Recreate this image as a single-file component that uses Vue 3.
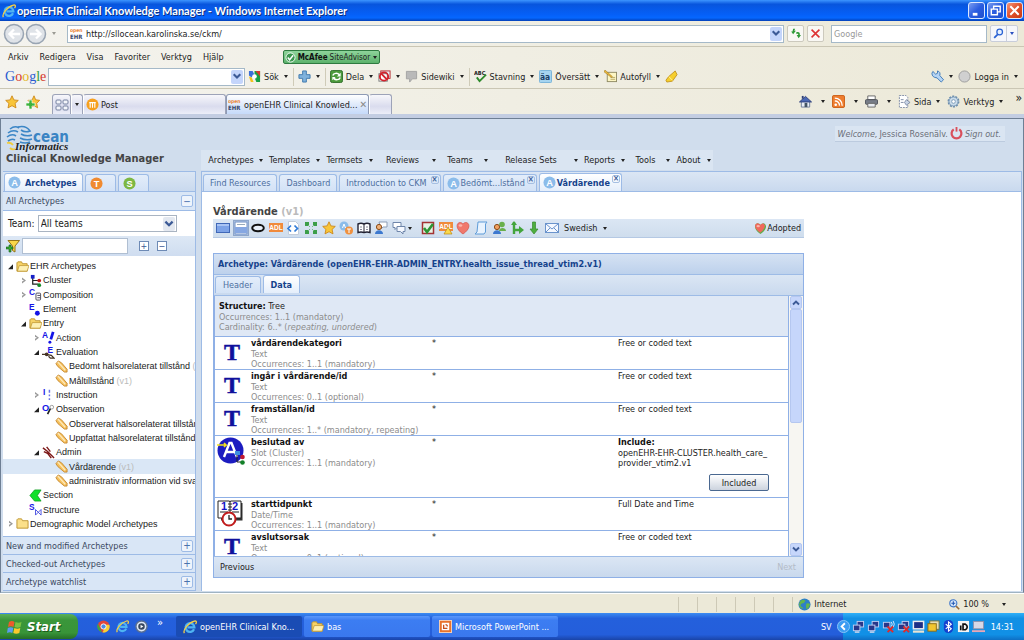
<template>
  <div class="screen">
    <!-- icon sprite -->
    <svg class="sprite" aria-hidden="true">
      <symbol id="ie" viewBox="0 0 16 16">
        <path d="M12.6 10.6A5 5 0 1 1 13 8.4H5" fill="none" stroke="#4fb4f2" stroke-width="2.6" />
        <path d="M1.6 15C-.5 12 6 3 13 1.200c3-.6 2.600 2 1.300 3.600" fill="none" stroke="#f5cf45" stroke-width="1.500" />
      </symbol>
      <symbol id="ehr" viewBox="0 0 14 14">
        <text x="0" y="5" font-size="5" font-weight="bold" fill="#e8873c" font-family="DejaVu Sans Condensed">open</text>
        <text x="0" y="12" font-size="6" font-weight="bold" fill="#3a4868" font-family="DejaVu Sans Condensed">EHR</text>
      </symbol>
      <symbol id="gsearch" viewBox="0 0 14 14">
        <path d="M1 1h4l2 4-3 3-3-2z" fill="#3b6fd8" /><path d="M7 1h6v12H9l-2-5z" fill="#15a045" />
        <path d="M8 1h5v6z" fill="#d93a2e" /><path d="M1 7l3 1 2 5H3z" fill="#f3c21c" /><circle cx="7" cy="7" r="2.500" fill="#fff" />
      </symbol>
      <symbol id="plus" viewBox="0 0 14 14">
        <path d="M5 1h4v4h4v4H9v4H5V9H1V5h4z" fill="#7fb2dc" stroke="#3f78ad" />
      </symbol>
      <symbol id="share" viewBox="0 0 14 14">
        <rect x=".5" y=".5" width="13" height="13" rx="2" fill="#4c9a3c" stroke="#2f6d29" />
        <path d="M3 6c1-3 5-3 7-1M11 8c-1 3-5 3-7 1" fill="none" stroke="#fff" stroke-width="1.600" />
        <path d="M11.500 3v4h-4zM2.500 11V7.500H6z" fill="#fff" />
      </symbol>
      <symbol id="popup" viewBox="0 0 14 14">
        <rect x="3" y="1" width="10" height="8" fill="#e9eef5" stroke="#b3272d" /><rect x="1" y="4" width="9" height="8" fill="#fff" stroke="#777" />
        <circle cx="6.500" cy="7" r="4.500" fill="none" stroke="#d3222c" stroke-width="2" /><path d="M3.500 4l6 6" stroke="#d3222c" stroke-width="2" />
      </symbol>
      <symbol id="bubble" viewBox="0 0 14 14"><path d="M1.500 1.500h11v8H8l-3 3.500V9.500H1.500z" fill="#b9b9b9" stroke="#a2a2a2" /></symbol>
      <symbol id="spell" viewBox="0 0 14 14">
        <text x="0" y="5" font-size="6" font-weight="bold" fill="#222" font-family="DejaVu Sans Condensed">ABC</text>
        <path d="M3 8l3 4 7-7" fill="none" stroke="#2e8a2b" stroke-width="2" />
      </symbol>
      <symbol id="translate" viewBox="0 0 14 14">
        <rect x=".5" y=".5" width="13" height="13" rx="1" fill="#a6d4ef" stroke="#74b1d8" />
        <text x="1" y="10.500" font-size="9" font-weight="bold" fill="#1c4066" font-family="DejaVu Sans Condensed">äa</text>
      </symbol>
      <symbol id="autofill" viewBox="0 0 14 14">
        <rect x="3.500" y="2.500" width="10" height="10" fill="#fdf6c4" stroke="#8f8a64" /><path d="M7 8h5M7 10h5" stroke="#b4a765" />
        <path d="M1 0l8 7-1 1-8-6z" fill="#e9b63b" stroke="#8d6a1b" stroke-width=".5" />
      </symbol>
      <symbol id="marker" viewBox="0 0 14 14">
        <path d="M1 11l3-4 7-6 2 4-5 7-6 1z" fill="#f6cf2e" stroke="#b9850d" stroke-width=".8" /><path d="M4 7l4 4" stroke="#fff3a0" />
      </symbol>
      <symbol id="wrench" viewBox="0 0 14 14">
        <path d="M2 1.500L5 4.500 7 3.500 7 1q3.500 1 2.500 5l4 4.500-2.500 2.500-4.500-4.500Q1 8 1 3.500z" fill="#b5d4f4" stroke="#3d78b8" />
      </symbol>
      <symbol id="ball" viewBox="0 0 14 14"><circle cx="7" cy="7" r="6" fill="#d0d0d0" stroke="#9c9c9c" /></symbol>
      <symbol id="star" viewBox="0 0 14 14">
        <path d="M7 .8l1.900 4.100 4.400.5-3.200 3 .9 4.500L7 10.700l-4 2.200.9-4.500-3.200-3 4.400-.5z" fill="#f8c53a" stroke="#c9800f" stroke-width=".8" />
      </symbol>
      <symbol id="staradd" viewBox="0 0 14 14">
        <path d="M8 .8l1.700 4 4 .5-3 3 .9 4.500L8 10.700l-4 2.200.9-4.500-3-3 4.200-.5z" fill="#f8c53a" stroke="#c9800f" stroke-width=".8" />
        <path d="M3 5h3v3h3v3H6v3H3v-3H0V8h3z" fill="#3eb33c" stroke="#fff" stroke-width=".6" />
      </symbol>
      <symbol id="quad" viewBox="0 0 14 14">
        <g fill="#f3f5fa" stroke="#7581a0"><rect x="1" y="2" width="5" height="4" rx="1" /><rect x="8" y="2" width="5" height="4" rx="1" /><rect x="1" y="8" width="5" height="4" rx="1" /><rect x="8" y="8" width="5" height="4" rx="1" /></g>
      </symbol>
      <symbol id="post" viewBox="0 0 14 14">
        <circle cx="7" cy="7" r="6.500" fill="#f6a01f" /><path d="M4.500 4.500v6M7 4.500v6M9.500 4.500v6M3.500 5h7" stroke="#fff" stroke-width="1.200" />
      </symbol>
      <symbol id="home" viewBox="0 0 14 14">
        <path d="M2.500 7v6h9V7" fill="#e8edf6" stroke="#6b7a99" /><path d="M.5 7.500L7 1.500l6.500 6z" fill="#4a68b4" stroke="#2c3f7a" /><rect x="6" y="8.500" width="3" height="4.500" fill="#456" /><path d="M3 1h2v3H3z" fill="#2c3f7a" />
      </symbol>
      <symbol id="rss" viewBox="0 0 14 14">
        <rect x=".5" y=".5" width="13" height="13" rx="1.500" fill="#ee7d2e" stroke="#c95d15" /><circle cx="4" cy="10.500" r="1.400" fill="#fff" />
        <path d="M3 6.500a4.500 4.500 0 0 1 5 5M3 3.300a8 8 0 0 1 8 8.200" fill="none" stroke="#fff" stroke-width="1.400" />
      </symbol>
      <symbol id="printer" viewBox="0 0 14 14">
        <path d="M3 1h8v4H3z" fill="#fff" stroke="#666" /><rect x=".5" y="5" width="13" height="5" rx="1" fill="#777d88" stroke="#4c5058" /><path d="M3 9h8v4H3z" fill="#e8ecf2" stroke="#666" />
      </symbol>
      <symbol id="page" viewBox="0 0 14 14">
        <path d="M1.500.5h7l2 2v11h-9z" fill="#fff" stroke="#7c89a4" stroke-dasharray="2 1" /><path d="M3 5h3M3 8h3" stroke="#7c89a4" /><path d="M9 5l4 3-4 3-2-3z" fill="#c8d4e6" stroke="#5d6c8c" stroke-width=".7" />
      </symbol>
      <symbol id="gear" viewBox="0 0 14 14">
        <circle cx="7" cy="7" r="5.500" fill="#bcd2e6" stroke="#6b8cab" stroke-width="1.800" stroke-dasharray="2.200 1.200" /><circle cx="7" cy="7" r="4.800" fill="#c9dbea" stroke="#7e9db9" /><circle cx="7" cy="7" r="2" fill="#fff" stroke="#7e9db9" />
      </symbol>
      <symbol id="lens" viewBox="0 0 14 14"><circle cx="8.500" cy="5" r="3.600" fill="#e6f1ff" stroke="#2a62d4" stroke-width="1.600" /><path d="M6 8l-4.500 4.500" stroke="#2a62d4" stroke-width="2.200" /></symbol>
      <symbol id="refresh" viewBox="0 0 14 14"><path d="M4 1l2.500 0-1 2.500h2L4 8 1.500 4.500h1.700zM8 5.500c3-1 5 0 4.500 3.500H14l-3 4-2.500-4h2c0-1.500-.5-2-2.500-1.500z" fill="#2f9a37" /></symbol>
      <symbol id="cross" viewBox="0 0 14 14"><path d="M2 2l10 10M12 2L2 12" stroke="#d33" stroke-width="2" /></symbol>
      <symbol id="chev" viewBox="0 0 10 10"><path d="M2 3l3 3 3-3" fill="none" stroke="#3c5a96" stroke-width="1.900" /></symbol>
      <symbol id="chevup" viewBox="0 0 10 10"><path d="M2 7l3-3 3 3" fill="none" stroke="#3c5a96" stroke-width="1.900" /></symbol>
      <symbol id="disc-a" viewBox="0 0 14 14"><circle cx="7" cy="7" r="6.500" fill="#8bbcea" /><text x="7" y="10.500" text-anchor="middle" font-size="10" font-weight="bold" fill="#fff" font-family="Liberation Sans">A</text></symbol>
      <symbol id="disc-t" viewBox="0 0 14 14"><circle cx="7" cy="7" r="6.500" fill="#f08a30" /><text x="7" y="10.500" text-anchor="middle" font-size="10" font-weight="bold" fill="#fff" font-family="Liberation Sans">T</text></symbol>
      <symbol id="disc-s" viewBox="0 0 14 14"><circle cx="7" cy="7" r="6.500" fill="#7db843" /><text x="7" y="10.500" text-anchor="middle" font-size="10" font-weight="bold" fill="#fff" font-family="Liberation Sans">S</text></symbol>
      <symbol id="funnel" viewBox="0 0 14 14">
        <path d="M2 1.500h11.500L9 7v6l-2.500-1.500V7z" fill="#f8d74a" stroke="#94751b" /><path d="M3 6h2v2h2v2H5v3H3v-3H0V8h3z" fill="#34a933" stroke="#185c18" stroke-width=".6" />
      </symbol>
      <symbol id="power" viewBox="0 0 14 14"><path d="M4 2.500a5.300 5.300 0 1 0 6 0" fill="none" stroke="#d9505c" stroke-width="2.400" /><path d="M7 0v5" stroke="#d9505c" stroke-width="2" /></symbol>
      <!-- tree icons -->
      <symbol id="folder" viewBox="0 0 14 14"><path d="M1 12V3l1-1h4l1 2h6v8z" fill="#fbe08a" stroke="#bd9430" /></symbol>
      <symbol id="folder-open" viewBox="0 0 14 14"><path d="M1 12V3l1-1h4l1 2h5v8z" fill="#f6d266" stroke="#bd9430" /><path d="M1.500 12l2-6H14l-2 6z" fill="#fdf0b4" stroke="#bd9430" stroke-width=".8" /></symbol>
      <symbol id="cluster" viewBox="0 0 14 14"><path d="M4 3v8h6M4 7h6" fill="none" stroke="#222" stroke-width="1.300" /><rect x="2" y="1" width="4" height="4" fill="#1620c8" /><circle cx="11" cy="7" r="2" fill="#c01818" /><circle cx="11" cy="12" r="2" fill="#138a28" /></symbol>
      <symbol id="composition" viewBox="0 0 14 14"><text x="0" y="8" font-size="9" font-weight="bold" fill="#1414e6" font-family="Liberation Sans">C</text><rect x="7.500" y="5.500" width="5" height="7.500" rx="1" fill="#fff" stroke="#445" /><path d="M9 8h3M9 10.500h3" stroke="#445" /></symbol>
      <symbol id="element" viewBox="0 0 14 14"><text x="0" y="8" font-size="9" font-weight="bold" fill="#1414e6" font-family="Liberation Sans">E</text><circle cx="9" cy="11" r="2.600" fill="#1414e6" /></symbol>
      <symbol id="action" viewBox="0 0 14 14"><text x="0" y="8" font-size="9" font-weight="bold" fill="#1414e6" font-family="Liberation Sans">A</text><path d="M12 1L9.500 9" stroke="#1414e6" stroke-width="3" /><circle cx="8.500" cy="12" r="1.600" fill="#1414e6" /></symbol>
      <symbol id="evaluation" viewBox="0 0 14 14"><text x="6" y="8" font-size="9" font-weight="bold" fill="#1414e6" font-family="Liberation Sans">E</text><path d="M0 9h4l6 1 3 3H9L7 11" fill="none" stroke="#432" stroke-width="1.300" /><circle cx="5" cy="9" r="2" fill="#432" /></symbol>
      <symbol id="instruction" viewBox="0 0 14 14"><text x="1" y="8" font-size="9" font-weight="bold" fill="#1414e6" font-family="Liberation Sans">I</text><path d="M8 2v3M8 7v2M8 11v2" stroke="#6b74e6" stroke-width="1.600" /></symbol>
      <symbol id="observation" viewBox="0 0 14 14"><text x="0" y="9" font-size="10" font-weight="bold" fill="#1414e6" font-family="Liberation Sans">O</text><circle cx="10.500" cy="4.500" r="2" fill="none" stroke="#999" /><path d="M9 6l-3 6" stroke="#222" stroke-width="1.800" /></symbol>
      <symbol id="admin" viewBox="0 0 14 14"><path d="M1 2l5 4 7 7M2 6l4 2 4 5M5 1l4 5" fill="none" stroke="#7c1616" stroke-width="1.500" /></symbol>
      <symbol id="section" viewBox="0 0 14 14"><path d="M6 1h7L9 7l4 6H6L1 7z" fill="#12e02a" stroke="#0a9c1b" stroke-width=".8" /></symbol>
      <symbol id="structure" viewBox="0 0 14 14"><text x="0" y="8" font-size="9" font-weight="bold" fill="#1414e6" font-family="Liberation Sans">S</text><path d="M7 7l6 6M13 7l-6 6M7 13V7M13 13V7" stroke="#4a50e0" fill="none" /></symbol>
      <symbol id="pencil" viewBox="0 0 14 14"><path d="M1 4l2.500-3L7 3l6 7v3h-3L3 7z" fill="#f6c15c" stroke="#c08128" stroke-width=".9" /><path d="M3 2l8 9" stroke="#fdeabf" stroke-width="1.400" /></symbol>
      <!-- archetype toolbar -->
      <symbol id="t-rect" viewBox="0 0 14 14"><rect x=".5" y="2.500" width="13" height="9" fill="#7da3e8" stroke="#4068b8" /><path d="M1 4h12" stroke="#a9c4f4" stroke-width="2" /></symbol>
      <symbol id="t-form" viewBox="0 0 14 14"><rect x="1" y="1" width="12" height="12" fill="#fff" stroke="#6f8fc4" /><rect x="1" y="6" width="12" height="6" fill="#86a7e2" /><path d="M3 3.500h8" stroke="#9ab" /></symbol>
      <symbol id="t-oval" viewBox="0 0 14 14"><ellipse cx="7" cy="7" rx="5.800" ry="3.200" fill="#e9f0fa" stroke="#111" stroke-width="2" /></symbol>
      <symbol id="t-adl" viewBox="0 0 14 14"><rect x="0" y="2" width="14" height="9" fill="#f08a3c" /><text x="7" y="9" text-anchor="middle" font-size="6.500" font-weight="bold" fill="#fff" font-family="Liberation Sans">ADL</text></symbol>
      <symbol id="t-xml" viewBox="0 0 14 14"><path d="M2.500.5h7l3 3v10h-10z" fill="#fff" stroke="#c3ccd9" /><path d="M5 4.500L2 7.500l3 3M8.500 4.500l3 3-3 3" fill="none" stroke="#2f7bd8" stroke-width="1.700" /></symbol>
      <symbol id="t-net" viewBox="0 0 14 14"><g fill="#3c9e49"><rect x="1" y="1" width="4" height="4" /><rect x="9" y="1" width="4" height="4" /><rect x="1" y="9" width="4" height="4" /><rect x="9" y="9" width="4" height="4" /></g><path d="M4 4l2 2M10 4L8 6M4 10l2-2M10 10L8 8" stroke="#7b8" /></symbol>
      <symbol id="t-at" viewBox="0 0 14 14"><circle cx="5" cy="5" r="4.500" fill="#8bbcea" /><circle cx="10" cy="9.500" r="4" fill="#f0913f" /><path d="M3.500 7L5 3l1.500 4M8 8h4M10 8v4" fill="none" stroke="#fff" /></symbol>
      <symbol id="t-book" viewBox="0 0 14 14"><path d="M1 3q3-1.500 6 0 3-1.500 6 0v8.500q-3-1-6 0-3-1-6 0z" fill="#fff" stroke="#223" stroke-width="1.400" /><path d="M7 3v9" stroke="#223" /><path d="M3 6h2M3 8.500h2M9 6h2M9 8.500h2" stroke="#889" /></symbol>
      <symbol id="t-user" viewBox="0 0 14 14"><path d="M5 1h8v5H9L7 8z" fill="#fff" stroke="#8d9db5" /><circle cx="5" cy="6" r="2.600" fill="#f0b27a" stroke="#8a4b17" /><path d="M1 13c0-5 8-5 8 0z" fill="#3c78cf" /></symbol>
      <symbol id="t-chat" viewBox="0 0 14 14"><path d="M1 1.500h8v5H5L3 8.500v-2H1z" fill="#fff" stroke="#6f86aa" /><path d="M5 5.500h8v5h-2v2.500l-2.500-2.500H5z" fill="#f4f8ff" stroke="#6f86aa" /></symbol>
      <symbol id="t-check" viewBox="0 0 14 14"><rect x="1.500" y="1.500" width="11" height="11" fill="#e8f3e6" stroke="#a33333" stroke-width="1.500" /><path d="M3 7l3 4 6-8" fill="none" stroke="#2d9433" stroke-width="2.600" /></symbol>
      <symbol id="t-adlwarn" viewBox="0 0 14 14"><rect x="0" y="1" width="14" height="9" fill="#f08a3c" /><text x="7" y="8" text-anchor="middle" font-size="6.500" font-weight="bold" fill="#fff" font-family="Liberation Sans">ADL</text><path d="M9 6l4 7H5z" fill="#fbd84c" stroke="#b98a12" stroke-width=".7" /></symbol>
      <symbol id="heart" viewBox="0 0 14 14"><path d="M7 13C-2 7 1 1 4.500 1.500 6 1.700 7 3 7 3s1-1.300 2.500-1.500C13 1 16 7 7 13z" fill="#f0786c" stroke="#d2554c" stroke-width=".7" /><ellipse cx="4.500" cy="4.500" rx="1.800" ry="1.200" fill="#fbb5ac" /></symbol>
      <symbol id="heart-ok" viewBox="0 0 14 14"><path d="M7 13C-2 7 1 1 4.500 1.500 6 1.700 7 3 7 3s1-1.300 2.500-1.500C13 1 16 7 7 13z" fill="#5fae4c" /><path d="M6.500 11.500C-1.500 6 1 1 4.500 1.500 6 1.700 7 3 7 3s1-1.300 2.500-1.500C12 1.300 14 6 6.500 11.500z" fill="#f0685c" /><ellipse cx="4.500" cy="4.500" rx="1.800" ry="1.200" fill="#fbb5ac" /></symbol>
      <symbol id="t-script" viewBox="0 0 14 14"><path d="M4 1h9l-1.500 2v8L10 13H1l2-2z" fill="#e9f3fe" stroke="#5f9cd8" /></symbol>
      <symbol id="t-team" viewBox="0 0 14 14"><circle cx="10" cy="3.500" r="2.800" fill="#69b04c" /><path d="M7 10c0-4 7-4 7 0z" fill="#69b04c" /><circle cx="5" cy="6" r="2.600" fill="#f0a060" stroke="#8a4b17" /><path d="M1 13c0-5 8-5 8 0z" fill="#3c78cf" /></symbol>
      <symbol id="t-branch" viewBox="0 0 14 14"><path d="M4 1v12M4 5v4h6" fill="none" stroke="#43a53c" stroke-width="2.400" /><path d="M9 5l5 4-5 4zM1 4l3-4 3 4z" fill="#43a53c" /></symbol>
      <symbol id="t-down" viewBox="0 0 14 14"><path d="M5.500 1h3v7H11l-4 5-4-5h2.500z" fill="#4fae3f" stroke="#378a2b" stroke-width=".7" /></symbol>
      <symbol id="t-mail" viewBox="0 0 14 14"><rect x=".5" y="2.500" width="13" height="9" fill="#f4f8ff" stroke="#6a93cc" /><path d="M1 3l6 5 6-5M1 11l4-4M13 11L9 7" fill="none" stroke="#6a93cc" /></symbol>
      <!-- entry icons -->
      <symbol id="e-text" viewBox="0 0 28 28"><text x="15" y="22" text-anchor="middle" font-size="24" font-weight="bold" fill="#10109c" stroke="#10109c" stroke-width=".5" font-family="Liberation Serif">T</text></symbol>
      <symbol id="e-slot" viewBox="0 0 28 28">
        <circle cx="13.500" cy="13.500" r="13" fill="#1c1cc0" /><path d="M7 20L12.500 6h2L20 20M9 15h9" fill="none" stroke="#fff" stroke-width="2.400" />
        <path d="M0 8h9l-2-2M9 8l-2 2" fill="none" stroke="#f2e21e" stroke-width="1.600" /><rect x="18" y="14" width="5" height="4" fill="#3d8ee0" /><path d="M20 18v7h5" fill="none" stroke="#222" /><circle cx="25.500" cy="20" r="2.300" fill="#c01830" /><circle cx="25.500" cy="25.500" r="2.300" fill="#128028" />
      </symbol>
      <symbol id="e-date" viewBox="0 0 28 28">
        <path d="M4 20h20V4" fill="none" stroke="#333" stroke-width="3" /><path d="M1 2h11q1 0 1 1 0-1 1-1h10v17H1z" fill="#fff" stroke="#222" /><path d="M13 2v14M3 13h8M15 13h7M11 5h4M11 8h4M11 11h4" stroke="#222" />
        <text x="4" y="11" font-size="11" font-weight="bold" fill="#1414c8" font-family="Liberation Sans">1</text><text x="15" y="11" font-size="11" font-weight="bold" fill="#1414c8" font-family="Liberation Sans">2</text>
        <circle cx="12" cy="20" r="6.500" fill="#fff" stroke="#c01c1c" stroke-width="2" /><path d="M12 16v4h3" fill="none" stroke="#222" stroke-width="1.300" />
      </symbol>
      <!-- taskbar -->
      <symbol id="flag" viewBox="0 0 16 16"><path d="M2 3q3-2 5.500 0L6.500 8Q4 6.500 1 8z" fill="#ee5a2c" /><path d="M8.500 3q3 1.500 6 0l-1 5q-3 1.500-6 0z" fill="#7cc242" /><path d="M.8 9q3-1.500 5.500 0l-1 5Q3 12.500 0 14z" fill="#5b9cf0" /><path d="M7.300 9q3 1.500 6 0l-1 5q-3 1.500-6 0z" fill="#fbc92d" /></symbol>
      <symbol id="chrome" viewBox="0 0 14 14"><circle cx="7" cy="7" r="6.500" fill="#e2453a" /><path d="M1 4l4.500 9.300A6.500 6.500 0 0 1 1 4z" fill="#37a64a" /><path d="M13.300 5A6.500 6.500 0 0 1 6 13.400L9.500 5z" fill="#f8cf35" /><circle cx="7" cy="7" r="2.800" fill="#4b8ce8" stroke="#fff" /></symbol>
      <symbol id="media" viewBox="0 0 14 14"><circle cx="7" cy="7" r="6" fill="#dfe8f6" stroke="#5a6f90" stroke-width="1.500" /><circle cx="7" cy="7" r="3.500" fill="#38485f" /><path d="M6 5l3 2-3 2z" fill="#fff" /></symbol>
      <symbol id="ppt" viewBox="0 0 14 14"><rect x=".5" y=".5" width="13" height="13" fill="#e8732c" stroke="#fbd3b5" /><rect x="3" y="3" width="8" height="8" fill="#fff" /><path d="M5 5v4h4M7 5a2 2 0 0 1 2 2" fill="none" stroke="#c7501b" stroke-width="1.400" /></symbol>
      <symbol id="globe" viewBox="0 0 14 14"><circle cx="7" cy="7" r="6.500" fill="#2d7fc8" /><path d="M3 3q3-2 5 0-1 3-4 3-2 1-1 3l3 2q-2 1-4-1-2-4 1-7zM9 6q3-1 4 1-1 4-4 5-1-3 0-6z" fill="#63b54c" /></symbol>
      <symbol id="zoomin" viewBox="0 0 14 14"><circle cx="5.500" cy="5.500" r="4.500" fill="#dbe9fb" stroke="#3b74c8" stroke-width="1.400" /><path d="M3 5.500h5M5.500 3v5" stroke="#2156b0" stroke-width="1.400" /><path d="M9 9l4 4" stroke="#9a6b38" stroke-width="2" /></symbol>
      <symbol id="net" viewBox="0 0 14 14"><rect x="5.500" y="1.500" width="7" height="6" fill="#28388a" stroke="#c3cdf0" /><rect x="1.500" y="5.500" width="7" height="6" fill="#28388a" stroke="#c3cdf0" /><path d="M3 13h5" stroke="#dde" stroke-width="1.500" /></symbol>
      <symbol id="wifi-off" viewBox="0 0 14 14"><rect x="1.500" y="2.500" width="7" height="6" fill="#28388a" stroke="#c3cdf0" /><path d="M10 2q2 2.500 0 5M12 1q2.500 3.500 0 7" fill="none" stroke="#dfe8fb" /><path d="M6 7l6 6M12 7l-6 6" stroke="#e02a2a" stroke-width="2" /></symbol>
      <symbol id="netoff" viewBox="0 0 14 14"><rect x="5.500" y="1.500" width="7" height="6" fill="#28388a" stroke="#c3cdf0" /><rect x="1.500" y="4.500" width="7" height="6" fill="#28388a" stroke="#c3cdf0" /><path d="M7 7l6 6M13 7l-6 6" stroke="#e02a2a" stroke-width="2" /></symbol>
      <symbol id="monitor" viewBox="0 0 14 14"><rect x="1.500" y="1.500" width="11" height="8" fill="#1c2f86" stroke="#eee" stroke-width="1.600" /><path d="M1 12.500h12" stroke="#e8e4d4" stroke-width="2.400" /></symbol>
      <symbol id="safe" viewBox="0 0 14 14"><rect x="3" y="1" width="10" height="9" fill="#e7dfb6" stroke="#7a7436" /><rect x="1" y="4" width="9" height="8" fill="#f2c62f" stroke="#8a6a12" /></symbol>
      <symbol id="bt" viewBox="0 0 14 14"><rect x="2" y="0" width="10" height="14" rx="4.500" fill="#1340cf" /><path d="M4 4.500l6 5L7 12V2l3 2.500-6 5" fill="none" stroke="#fff" stroke-width="1.200" /></symbol>
      <symbol id="id" viewBox="0 0 14 14"><rect x="1" y="1" width="12" height="12" fill="#f4f4f4" /><path d="M4 6v5M6.500 4.500H9q2 1 2 3t-2 3H6.500z" fill="none" stroke="#111" stroke-width="1.800" /></symbol>
      <symbol id="pad" viewBox="0 0 14 14"><rect x="1.500" y="1.500" width="11" height="8" fill="#d7d8e6" stroke="#8c8fa8" /><path d="M0 12h14" stroke="#e9a7b5" stroke-width="2" /></symbol>
    </svg>

    <header class="titlebar">
      <svg class="i14"><use href="#ie" /></svg>
      <h1>openEHR Clinical Knowledge Manager - Windows Internet Explorer</h1>
      <div class="win-controls">
        <button class="win" aria-label="Minimize"><svg viewBox="0 0 16 16"><path d="M4 12h5" stroke="#fff" stroke-width="3" /></svg></button>
        <button class="win" aria-label="Restore"><svg viewBox="0 0 16 16"><path d="M6 6V3.500h7v6h-2.500M3.500 6.500h6.500v6H3.500z" fill="none" stroke="#fff" stroke-width="1.500" /></svg></button>
        <button class="win close" aria-label="Close"><svg viewBox="0 0 16 16"><path d="M3.500 3.500l9 9M12.500 3.500l-9 9" stroke="#fff" stroke-width="2.200" /></svg></button>
      </div>
    </header>

    <div class="address-row">
      <svg class="nav-arrows" viewBox="0 0 44 22">
        <g fill="#dfe3e8" stroke="#98a4b2" stroke-width="1.500"><circle cx="11" cy="11" r="9.500" /><circle cx="33" cy="11" r="9.500" /></g>
        <path d="M17 11H7M11 6.500L6.500 11l4.500 4.500M27 11h10M33 6.500l4.500 4.500-4.500 4.500" fill="none" stroke="#fff" stroke-width="2.400" />
      </svg>
      <span class="caret muted"></span>
      <div class="field address">
        <svg class="i14"><use href="#ehr" /></svg>
        <input v-model="url" aria-label="Address" />
        <button class="drop" aria-label="Show addresses"><svg><use href="#chev" /></svg></button>
      </div>
      <button class="square" aria-label="Refresh"><svg><use href="#refresh" /></svg></button>
      <button class="square" aria-label="Stop"><svg><use href="#cross" /></svg></button>
      <div class="field search"><input placeholder="Google" aria-label="Search" /></div>
      <div class="search-go">
        <button aria-label="Search"><svg class="i11"><use href="#lens" /></svg></button>
        <button aria-label="Search options"><span class="caret blue"></span></button>
      </div>
    </div>

    <nav class="menu-row">
      <button v-for="m in browserMenu" :key="m">{{ m }}</button>
      <button class="mcafee"><svg viewBox="0 0 12 12"><circle cx="6" cy="6" r="5" fill="#3c9850" stroke="#fff" /><path d="M3 6l2 2.500 4-5" fill="none" stroke="#fff" stroke-width="1.500" /></svg><b>McAfee</b> SiteAdvisor <span class="caret"></span></button>
    </nav>

    <div class="google-row">
      <span class="google"><i class="c1">G</i><i class="c2">o</i><i class="c3">o</i><i class="c1">g</i><i class="c4">l</i><i class="c2">e</i></span>
      <div class="field google-field">
        <input aria-label="Google search" />
        <button class="drop" aria-label="Search history"><svg><use href="#chev" /></svg></button>
      </div>
      <template v-for="t in googleTools" :key="t.icon">
        <span v-if="t.sep" class="sep"></span>
        <button class="tool" :aria-label="t.label || t.icon">
          <svg class="i13"><use :href="'#' + t.icon" /></svg>
          <span v-if="t.label">{{ t.label }}</span>
          <span v-if="!t.plain" class="caret"></span>
        </button>
      </template>
      <span class="grow"></span>
      <button class="tool" aria-label="Settings"><svg class="i13"><use href="#wrench" /></svg><span class="caret"></span></button>
      <button class="tool"><svg class="i13"><use href="#ball" /></svg><span>Logga in</span><span class="caret"></span></button>
    </div>

    <div class="tab-row">
      <button class="fav" aria-label="Favorites"><svg class="i14"><use href="#star" /></svg></button>
      <button class="fav" aria-label="Add favorite"><svg class="i14"><use href="#staradd" /></svg></button>
      <div class="btabs">
        <button class="btab quick" aria-label="Quick tabs"><svg class="i14"><use href="#quad" /></svg></button>
        <button class="btab pick" aria-label="Tab list"><span class="caret"></span></button>
        <button class="btab page"><svg class="i13"><use href="#post" /></svg>Post</button>
        <button class="btab page active"><svg class="i14"><use href="#ehr" /></svg>openEHR Clinical Knowled...<span class="x">✕</span></button>
        <button class="btab new" aria-label="New tab"></button>
      </div>
      <div class="commands">
        <button v-for="c in commands" :key="c.icon" class="tool" :class="{ bare: !c.label }" :aria-label="c.label || c.icon">
          <svg class="i13"><use :href="'#' + c.icon" /></svg>
          <span v-if="c.label">{{ c.label }}</span>
          <span class="caret"></span>
        </button>
        <span class="more">»</span>
      </div>
    </div>

    <div class="app">
      <div class="app-head">
        <div class="brand">
          <svg class="logo" viewBox="0 0 64 27">
            <g fill="none" stroke="#3c86c6" stroke-width="1.600">
              <path d="M4 4q5-4 9-1M2 8q5-4 10-1M1 12q5-4 9-1M2 16q4-3 7-1" />
              <path d="M12 2q8-2 12 4-5 2-9-1M15 9q5 3 11 1M14 13q6 3 12 1M14 17q5 2 10 0" />
            </g>
            <path d="M1 18q4-1 6 2M4 23q2 2 5 1" fill="none" stroke="#f0cb3a" stroke-width="1.800" />
            <text x="27" y="17" font-size="15" font-weight="bold" fill="#3a84c4" font-family="DejaVu Sans Condensed">cean</text>
            <text x="9" y="25" font-size="11" font-style="italic" font-weight="bold" fill="#222" font-family="Liberation Serif">Informatics</text>
          </svg>
          <h2>Clinical Knowledge Manager</h2>
        </div>
        <nav class="main-menu">
          <button v-for="m in mainMenu" :key="m"><span>{{ m }}</span><span class="caret"></span></button>
        </nav>
        <div class="welcome"><em>Welcome,</em> Jessica Rosenälv. <svg class="i13"><use href="#power" /></svg><a href="#">Sign out.</a></div>
      </div>

      <aside class="sidebar">
        <div class="tabs">
          <button class="tab active side"><svg class="i13"><use href="#disc-a" /></svg>Archetypes</button>
          <button class="tab mini" aria-label="Templates"><svg class="i13"><use href="#disc-t" /></svg></button>
          <button class="tab mini" aria-label="Termsets"><svg class="i13"><use href="#disc-s" /></svg></button>
        </div>
        <div class="acc first-acc">All Archetypes<button aria-label="Collapse">−</button></div>
        <div class="team">
          <label for="team">Team:</label>
          <div class="select">
            <select id="team"><option>All teams</option></select>
            <svg class="drop"><use href="#chev" /></svg>
          </div>
        </div>
        <div class="filter">
          <svg class="i14"><use href="#funnel" /></svg>
          <input v-model="filter" aria-label="Filter" />
          <button aria-label="Expand all">+</button>
          <button aria-label="Collapse all">−</button>
        </div>
        <ul class="tree">
          <li v-for="n in tree" :key="n.text" :class="{ selected: n.selected }" :style="{ paddingLeft: n.level * 13 + 5 + 'px' }">
            <span class="twist" :class="n.state"></span>
            <svg class="i13"><use :href="'#' + n.icon" /></svg>
            <span>{{ n.text }} <small v-if="n.version">(v1)</small></span>
          </li>
        </ul>
        <div v-for="a in accordions" :key="a" class="acc">{{ a }}<button aria-label="Expand">+</button></div>
      </aside>

      <main class="main">
        <div class="tabs">
          <button v-for="t in pageTabs" :key="t.text" class="tab" :class="{ active: t.active, closable: t.close, iconic: t.icon }">
            <svg v-if="t.icon" class="i13"><use href="#disc-a" /></svg>{{ t.text }}<span v-if="t.close" class="tab-x">×</span>
          </button>
        </div>
        <section class="content">
          <h3>Vårdärende <span>(v1)</span></h3>
          <div class="toolbar">
            <div class="group first">
              <button v-for="i in viewTools" :key="i" :class="{ on: i === 't-form' }" :aria-label="i"><svg class="i14"><use :href="'#' + i" /></svg></button>
            </div>
            <span class="caret"></span>
            <div class="group second">
              <button v-for="i in editTools" :key="i" :aria-label="i"><svg class="i14"><use :href="'#' + i" /></svg></button>
            </div>
            <button class="lang">Swedish <span class="caret"></span></button>
            <span class="adopted"><svg class="i13"><use href="#heart-ok" /></svg>Adopted</span>
          </div>

          <div class="panel">
            <h4>Archetype: Vårdärende (openEHR-EHR-ADMIN_ENTRY.health_issue_thread_vtim2.v1)</h4>
            <div class="tabs inner">
              <button class="tab">Header</button>
              <button class="tab active">Data</button>
            </div>
            <div class="scroll">
              <div class="rows">
                <div class="structure">
                  <div><b>Structure:</b> Tree</div>
                  <p>Occurrences: 1..1 (mandatory)</p>
                  <p>Cardinality: 6..* (<em>repeating, unordered</em>)</p>
                </div>
                <table>
                  <tbody>
                    <tr v-for="e in entries" :key="e.name" :class="{ slot: e.include }">
                      <td class="icon"><svg><use :href="'#' + e.icon" /></svg></td>
                      <td class="name"><b>{{ e.name }}</b><p>{{ e.type }}</p><p>Occurrences: {{ e.occurs }}</p></td>
                      <td class="mark">*</td>
                      <td class="desc">
                        <template v-if="e.include">
                          <b>Include:</b>
                          <p>openEHR-EHR-CLUSTER.health_care_<br />provider_vtim2.v1</p>
                          <button>Included</button>
                        </template>
                        <template v-else>{{ e.desc }}</template>
                      </td>
                    </tr>
                  </tbody>
                </table>
              </div>
              <div class="scrollbar">
                <span class="arrow"><svg><use href="#chevup" /></svg></span>
                <span class="thumb"></span>
                <span class="arrow"><svg><use href="#chev" /></svg></span>
              </div>
            </div>
            <footer><button>Previous</button><button disabled>Next</button></footer>
          </div>
        </section>
      </main>
    </div>

    <div class="statusbar">
      <span class="grow"></span>
      <span v-for="n in 6" :key="n" class="cell"></span>
      <span class="zone"><svg class="i13"><use href="#globe" /></svg>Internet</span>
      <span class="zoom"><svg class="i11"><use href="#zoomin" /></svg>100 %<span class="caret"></span></span>
    </div>

    <div class="taskbar">
      <button class="start"><svg><use href="#flag" /></svg>Start</button>
      <div class="quick-launch">
        <svg><use href="#chrome" /></svg><svg><use href="#ie" /></svg><svg><use href="#media" /></svg><span>»</span>
      </div>
      <button class="task current"><svg class="i14"><use href="#ie" /></svg>openEHR Clinical Kno...</button>
      <button class="task"><svg class="i13"><use href="#folder-open" /></svg>bas</button>
      <button class="task"><svg class="i13"><use href="#ppt" /></svg>Microsoft PowerPoint ...</button>
      <span class="grow"></span>
      <span class="locale">SV</span>
      <div class="tray">
        <svg class="expand" viewBox="0 0 14 14"><circle cx="7" cy="7" r="6.500" fill="#3b9cf2" stroke="#8cc8fa" /><path d="M8.500 3.500L5 7l3.500 3.500" fill="none" stroke="#fff" stroke-width="2" /></svg>
        <svg v-for="(t, i) in tray" :key="i" class="i13"><use :href="'#' + t" /></svg>
        <time>14:31</time>
      </div>
    </div>
  </div>
</template>

<script setup>
import { ref } from 'vue'

const url = ref('http://sllocean.karolinska.se/ckm/')
const filter = ref('')

const browserMenu = ['Arkiv', 'Redigera', 'Visa', 'Favoriter', 'Verktyg', 'Hjälp']
const googleTools = [
  { icon: 'gsearch', label: 'Sök' },
  { icon: 'plus', sep: true },
  { icon: 'share', label: 'Dela', sep: true },
  { icon: 'popup' },
  { icon: 'bubble', label: 'Sidewiki' },
  { icon: 'spell', label: 'Stavning', sep: true },
  { icon: 'translate', label: 'Översätt' },
  { icon: 'autofill', label: 'Autofyll' },
  { icon: 'marker', plain: true },
]
const commands = [
  { icon: 'home' },
  { icon: 'rss' },
  { icon: 'printer' },
  { icon: 'page', label: 'Sida' },
  { icon: 'gear', label: 'Verktyg' },
]
const mainMenu = ['Archetypes', 'Templates', 'Termsets', 'Reviews', 'Teams', 'Release Sets', 'Reports', 'Tools', 'About']
const pageTabs = [
  { text: 'Find Resources' },
  { text: 'Dashboard' },
  { text: 'Introduction to CKM', close: true },
  { text: 'Bedömt...lstånd', icon: true, close: true },
  { text: 'Vårdärende', icon: true, close: true, active: true },
]
const tree = [
  { level: 0, state: 'open', icon: 'folder-open', text: 'EHR Archetypes' },
  { level: 1, state: 'shut', icon: 'cluster', text: 'Cluster' },
  { level: 1, state: 'shut', icon: 'composition', text: 'Composition' },
  { level: 1, icon: 'element', text: 'Element' },
  { level: 1, state: 'open', icon: 'folder-open', text: 'Entry' },
  { level: 2, state: 'shut', icon: 'action', text: 'Action' },
  { level: 2, state: 'open', icon: 'evaluation', text: 'Evaluation' },
  { level: 3, icon: 'pencil', text: 'Bedömt hälsorelaterat tillstånd', version: true },
  { level: 3, icon: 'pencil', text: 'Måltillstånd', version: true },
  { level: 2, state: 'shut', icon: 'instruction', text: 'Instruction' },
  { level: 2, state: 'open', icon: 'observation', text: 'Observation' },
  { level: 3, icon: 'pencil', text: 'Observerat hälsorelaterat tillstånd', version: true },
  { level: 3, icon: 'pencil', text: 'Uppfattat hälsorelaterat tillstånd', version: true },
  { level: 2, state: 'open', icon: 'admin', text: 'Admin' },
  { level: 3, icon: 'pencil', text: 'Vårdärende', version: true, selected: true },
  { level: 3, icon: 'pencil', text: 'administrativ information vid svar' },
  { level: 1, icon: 'section', text: 'Section' },
  { level: 1, icon: 'structure', text: 'Structure' },
  { level: 0, state: 'shut', icon: 'folder', text: 'Demographic Model Archetypes' },
]
const accordions = ['New and modified Archetypes', 'Checked-out Archetypes', 'Archetype watchlist']
const viewTools = ['t-rect', 't-form', 't-oval', 't-adl', 't-xml', 't-net', 'star', 't-at', 't-book', 't-user', 't-chat']
const editTools = ['t-check', 't-adlwarn', 'heart', 't-script', 't-team', 't-branch', 't-down', 't-mail']
const entries = [
  { icon: 'e-text', name: 'vårdärendekategori', type: 'Text', occurs: '1..1 (mandatory)', desc: 'Free or coded text' },
  { icon: 'e-text', name: 'ingår i vårdärende/id', type: 'Text', occurs: '0..1 (optional)', desc: 'Free or coded text' },
  { icon: 'e-text', name: 'framställan/id', type: 'Text', occurs: '1..* (mandatory, repeating)', desc: 'Free or coded text' },
  { icon: 'e-slot', name: 'beslutad av', type: 'Slot (Cluster)', occurs: '1..1 (mandatory)', include: true },
  { icon: 'e-date', name: 'starttidpunkt', type: 'Date/Time', occurs: '1..1 (mandatory)', desc: 'Full Date and Time' },
  { icon: 'e-text', name: 'avslutsorsak', type: 'Text', occurs: '0..1 (optional)', desc: 'Free or coded text' },
]
const tray = ['net', 'net', 'wifi-off', 'netoff', 'monitor', 'safe', 'bt', 'id', 'pad']
</script>

<style>
body {
  margin: 0;
}
</style>

<style scoped>
.screen {
  display: flex;
  flex-direction: column;
  height: 100vh;
  overflow: hidden;
  font-family: 'DejaVu Sans Condensed', 'DejaVu Sans', sans-serif;
  font-size: 9px;
  color: #222;
  background: #ece9d8;
}
.screen * {
  box-sizing: border-box;
}
svg {
  flex: none;
  display: block;
}
.sprite {
  display: none;
}
button,
input,
select {
  font: inherit;
  color: inherit;
  margin: 0;
  padding: 0;
  border: 0;
  background: none;
  outline: none;
}
button {
  display: flex;
  align-items: center;
  white-space: nowrap;
}
h1,
h2,
h3,
h4,
p,
ul {
  margin: 0;
  padding: 0;
}
.i11 { width: 11px; height: 11px; }
.i13 { width: 13px; height: 13px; }
.i14 { width: 14px; height: 14px; }
.grow {
  flex: 1;
}
.caret {
  flex: none;
  width: 0;
  height: 0;
  margin: 0 2px;
  border: 2px solid transparent;
  border-top: 3px solid #222;
  border-bottom: 0;
}
.caret.muted { border-top-color: #9a9a94; }
.caret.blue { border-top-color: #2a50c0; }

/* window title */
.titlebar {
  flex: none;
  display: flex;
  align-items: center;
  height: 21px;
  padding: 0 1px 0 2px;
  background: linear-gradient(#3d95ff, #0855dd 20%, #0560f8 70%, #0567ff 85%, #0340b8);
}
.titlebar h1 {
  flex: 1;
  margin-left: 1px;
  font-family: Lato, sans-serif;
  font-size: 11px;
  color: #fff;
  text-shadow: 1px 1px #0a2f80;
}
.win-controls {
  display: flex;
  gap: 2px;
}
.win {
  width: 17px;
  height: 17px;
  border: 1px solid #dce8ff;
  border-radius: 3px;
  background: linear-gradient(135deg, #7a9cf0, #2a5de0 50%, #2050cc);
}
.win.close {
  background: linear-gradient(135deg, #f2957a, #e0502a 50%, #c83a14);
}

/* address bar */
.address-row {
  flex: none;
  display: flex;
  align-items: center;
  height: 26px;
  padding: 0 6px 0 3px;
  gap: 3px;
  background: linear-gradient(90deg, #f4f3ee, #ece9d8);
  border-bottom: 1px solid #cac6b4;
}
.nav-arrows { width: 44px; height: 22px; }
.address-row > .caret { margin: 0 8px 0 2px; }
.field {
  display: flex;
  align-items: center;
  height: 18px;
  background: #fff;
  border: 1px solid #a5b9c8;
}
.field input {
  flex: 1;
  min-width: 0;
  padding-left: 2px;
}
.field.address { flex: 1; padding-left: 2px; }
.field.search { width: 156px; margin-left: 4px; }
.field.search input::placeholder { color: #999; opacity: 1; }
.drop {
  width: 12px;
  height: 14px;
  margin-right: 1px;
  background: #c4d5fb;
  border-radius: 2px;
}
.drop svg { width: 12px; height: 11px; }
.square {
  width: 17px;
  height: 17px;
  justify-content: center;
  border: 1px solid #ccc9bd;
  border-radius: 2px;
  background: #f9f8f4;
}
.square svg { width: 11px; height: 11px; }
.search-go {
  display: flex;
  height: 17px;
  border: 1px solid #c8cdda;
  border-radius: 2px;
  background: #f6f7fb;
}
.search-go button { padding: 0 2px; }
.search-go button + button { border-left: 1px solid #c8cdda; padding: 0 1px; }

.menu-row {
  flex: none;
  display: flex;
  align-items: center;
  gap: 11px;
  height: 20px;
  padding-left: 8px;
  background: linear-gradient(90deg, #f4f3ee, #ece9d8);
}
.mcafee {
  height: 14px;
  margin-left: 48px;
  padding: 0 1px;
  gap: 2px;
  font-size: 8px;
  border: 1px solid #2e7a40;
  border-radius: 2px;
  background: linear-gradient(#8fd49b, #5cb26c);
}
.mcafee svg { width: 11px; height: 11px; }
.mcafee .caret { margin: 0 1px; }

.google-row {
  flex: none;
  display: flex;
  align-items: center;
  height: 22px;
  gap: 3px;
  padding: 0 4px 2px 5px;
  background: linear-gradient(90deg, #f4f3ee, #ece9d8);
  border-bottom: 1px solid #cac6b4;
}
.google {
  width: 40px;
  font: 14px 'Liberation Serif', serif;
}
.google i { font-style: normal; }
.c1 { color: #2a5bd0; }
.c2 { color: #d4372c; }
.c3 { color: #e3b41e; }
.c4 { color: #2f9b42; }
.google-field { width: 197px; }
.tool { gap: 3px; }
.sep {
  width: 1px;
  height: 18px;
  margin-right: 1px;
  background: #cfcbb8;
}

/* browser tabs */
.tab-row {
  flex: none;
  display: flex;
  align-items: center;
  height: 29px;
  padding-left: 5px;
  background: linear-gradient(90deg, #f4f3ee, #ece9d8);
  border-bottom: 4px solid #c3cde2;
}
.fav { margin-right: 7px; }
.btabs {
  display: flex;
  align-self: flex-end;
  height: 20px;
  margin-left: 5px;
  flex: 1;
}
.btab {
  border: 1px solid #9da3b8;
  border-bottom: 0;
  border-left-color: #fff;
  border-radius: 3px 3px 0 0;
  background: linear-gradient(#f7f7fb, #dadcee 60%, #eceef8);
}
.quick { width: 19px; padding-left: 2px; border-left-color: #9da3b8; }
.pick { width: 12px; padding-left: 1px; }
.page { width: 143px; padding: 0 4px 0 2px; gap: 2px; }
.page.active {
  padding-left: 1px;
  border-color: #8e9ab5;
  background: linear-gradient(#fff, #dfeafb 50%, #c6dafa);
}
.page .x { margin-left: auto; color: #888; font-size: 10px; }
.new { width: 23px; }
.commands {
  display: flex;
  align-items: center;
  gap: 5px;
  padding-right: 2px;
}
.commands .bare { gap: 7px; }
.more {
  align-self: flex-start;
  margin: -2px 0 0 5px;
  font-size: 12px;
  line-height: 10px;
}

/* application */
.app {
  flex: 1;
  min-height: 0;
  display: grid;
  grid-template: 52px 1fr / 193px 1fr;
  column-gap: 5px;
  padding: 0 1px 1px 2px;
  border: 1px solid #6e7f94;
  border-bottom-color: #9fb3c2;
  background: #d0dded;
}
.app-head {
  grid-column: 1 / -1;
  display: grid;
  grid-template-columns: 198px 1fr auto;
}
.brand { padding: 6px 0 0 3px; }
.logo { width: 64px; height: 27px; }
.brand h2 {
  font-size: 11px;
  line-height: 13px;
  color: #444;
  white-space: nowrap;
}
.main-menu {
  align-self: end;
  justify-self: start;
  display: grid;
  grid-template-columns: 60px 57px 53px 63px 52px 90px 47px 45px 41px;
  height: 20px;
  margin-bottom: 1px;
  padding-left: 4px;
  background: #dae5f2;
}
.main-menu button span:first-child { flex: 1; text-align: center; }
.welcome {
  display: flex;
  align-items: center;
  align-self: start;
  height: 16px;
  margin: 7px 17px 0 0;
  padding: 0 4px 0 2px;
  gap: 2px;
  color: #6b6f78;
  background: #dae5f2;
  border-bottom: 1px solid #bccbdf;
}
.welcome a {
  color: inherit;
  font-style: italic;
  text-decoration: none;
}
.tabs {
  flex: none;
  display: flex;
  align-items: flex-end;
  height: 21px;
  padding-left: 1px;
  gap: 2px;
  background: linear-gradient(#dbe6f4, #c9d9ee);
  border: 1px solid #9dbbe6;
  border-width: 1px 0;
}
.tab {
  height: 17px;
  padding: 0 6px;
  gap: 3px;
  color: #4d6f9f;
  border: 1px solid #9dbbe6;
  border-bottom: 0;
  border-radius: 3px 3px 0 0;
  background: linear-gradient(#e3edfa, #d3e2f6);
}
.tab.active {
  font-weight: bold;
  color: #15428b;
  background: linear-gradient(#fff, #e4eefb);
  height: 18px;
}
.tab.closable { padding-right: 1px; }
.tab.iconic { padding-left: 3px; gap: 1px; }
.tab-x {
  align-self: flex-start;
  width: 8px;
  height: 8px;
  margin: 1px 0 0 1px;
  border: 1px solid #a5bfe2;
  border-radius: 2px;
  font-size: 8px;
  line-height: 6px;
  font-weight: bold;
  color: #3f6299;
}
.tab.side { width: 79px; padding: 0 3px; gap: 4px; }
.tab.mini { width: 31px; padding: 0 4px; }

.sidebar {
  display: flex;
  flex-direction: column;
  min-height: 0;
  min-width: 0;
  border-right: 1px solid #9dbbe6;
  background: #fff;
}
.acc {
  flex: none;
  display: flex;
  align-items: center;
  justify-content: space-between;
  height: 18px;
  padding: 0 2px 0 3px;
  color: #3a4860;
  background: #d9e6f6;
  border-bottom: 1px solid #9dbbe6;
}
.first-acc { height: 19px; }
.acc button {
  width: 12px;
  height: 12px;
  justify-content: center;
  color: #4a71ad;
  border: 1px solid #9dbbe6;
  border-radius: 2px;
  background: #eef4fc;
  font-size: 10px;
}
.team {
  flex: none;
  display: flex;
  align-items: center;
  height: 25px;
  padding-left: 5px;
  gap: 3px;
  font-size: 10px;
}
.select {
  display: flex;
  align-items: center;
  width: 139px;
  height: 17px;
  border: 1px solid #a9b4c2;
}
.select select {
  flex: 1;
  appearance: none;
  padding-left: 2px;
}
.select .drop { background: #e3e8f0; }
.filter {
  flex: none;
  display: flex;
  align-items: center;
  height: 20px;
  padding-left: 3px;
  gap: 2px;
  background: linear-gradient(#dde8f5, #cfddf0);
}
.filter input {
  width: 106px;
  height: 16px;
  margin-right: 9px;
  background: #fff;
  border: 1px solid #b0bfd2;
}
.filter button {
  width: 10px;
  height: 10px;
  margin-right: 6px;
  justify-content: center;
  border: 1px solid #6d8ab5;
  background: #fff;
  color: #3a5a94;
}
.tree {
  flex: 1;
  min-height: 0;
  display: grid;
  grid-auto-rows: 1fr;
  padding: 3px 0 5px;
  overflow: hidden;
  font-family: 'Liberation Sans', Arial, sans-serif;
  list-style: none;
  border-bottom: 1px solid #9dbbe6;
}
.tree li {
  display: flex;
  align-items: center;
  min-height: 0;
  overflow: hidden;
  white-space: nowrap;
}
.tree li > svg { margin-right: 1px; }
.tree small { font-size: 9px; color: #bbb; }
.tree .selected { background: #dae7f6; }
.twist {
  flex: none;
  width: 8px;
  height: 8px;
}
.twist.open { background: #222; clip-path: polygon(5px 2px, 5px 7px, 0 7px); }
.twist.shut { background: #999; clip-path: polygon(1px 1px, 5px 4px, 1px 7px, 1px 5px, 3px 4px, 1px 3px); }

.main {
  display: flex;
  flex-direction: column;
  min-height: 0;
  min-width: 0;
  border-left: 1px solid #9dbbe6;
  border-right: 1px solid #9dbbe6;
  background: #fff;
}
.content {
  flex: 1;
  min-height: 0;
  display: flex;
  flex-direction: column;
  width: 74%;
  padding: 13px 4px 13px 11px;
}
.content h3 {
  font-size: 11px;
  line-height: 14px;
  color: #444;
}
.content h3 span { color: #bbb; }
.toolbar {
  flex: none;
  display: flex;
  align-items: center;
  height: 19px;
  padding: 0 3px;
  background: linear-gradient(#dbe6f4, #cfdded);
  border-bottom: 1px solid #b5c9e4;
}
.group { display: flex; justify-content: space-between; }
.first { width: 190px; }
.second { width: 138px; margin-left: 7px; }
.group .on { outline: 1px solid #8ea6cb; background: #b8cbe8; }
.lang { margin-left: 5px; gap: 3px; }
.adopted {
  display: flex;
  align-items: center;
  margin-left: auto;
}

.panel {
  flex: 1;
  min-height: 0;
  display: flex;
  flex-direction: column;
  margin-top: 15px;
  border: 1px solid #8fb0e6;
}
.panel h4 {
  flex: none;
  padding-left: 4px;
  font-size: 9px;
  line-height: 20px;
  color: #15428b;
  background: linear-gradient(#d5e2f3, #bdd1ec);
}
.tabs.inner { height: 22px; padding-bottom: 2px; }
.inner .tab { padding: 0 7px; }
.scroll {
  flex: 1;
  min-height: 0;
  display: flex;
}
.rows {
  flex: 1;
  overflow: hidden;
  border: 1px solid #8fb0e6;
  border-width: 0 1px;
}
.structure {
  height: 41px;
  padding: 5px 4px 0;
  line-height: 11px;
  background: #dfe8f5;
  border-bottom: 1px solid #8fb0e6;
}
.structure p { line-height: 10px; color: #8c8c8c; }
table {
  width: 100%;
  border-spacing: 0;
  table-layout: fixed;
}
td {
  height: 33px;
  padding: 0;
  line-height: 12px;
  vertical-align: top;
  border-bottom: 1px solid #8fb0e6;
}
.slot td { height: 62px; }
b { color: #111; }
td b { display: block; }
td p { line-height: 10px; }
.name p { color: #8c8c8c; }
td.icon { width: 36px; padding: 1px 0 0 2px; }
td.icon svg { width: 28px; height: 28px; }
.name { width: 181px; }
.mark { width: 186px; }
.desc button {
  width: 60px;
  height: 17px;
  margin: 6px 0 0 91px;
  justify-content: center;
  border: 1px solid #4a6890;
  border-radius: 2px;
  background: linear-gradient(#fff, #ccd3de);
}
.scrollbar {
  display: flex;
  flex-direction: column;
  width: 14px;
  padding: 0 1px;
  background: #f7f6f2;
}
.arrow,
.thumb {
  border: 1px solid #b5c7f0;
  border-radius: 2px;
  background: #c6d6fb;
}
.arrow {
  height: 13px;
}
.arrow svg { width: 10px; height: 11px; }
.thumb { flex: 0 0 44%; margin-bottom: auto; }
.panel footer {
  flex: none;
  display: flex;
  justify-content: space-between;
  height: 21px;
  padding: 0 7px 0 6px;
  background: linear-gradient(#dbe6f4, #c9d9ed);
  border-top: 1px solid #9dbbe6;
}
footer button:disabled { color: #b4bcc8; }

/* status bar */
.statusbar {
  flex: none;
  display: flex;
  align-items: center;
  height: 20px;
  padding: 1px 16px 0 0;
  background: #ece9d8;
  border-top: 1px solid #fff;
}
.cell {
  width: 19px;
  height: 15px;
  border-left: 1px solid #cdc9b6;
}
.zone,
.zoom {
  display: flex;
  align-items: center;
  gap: 3px;
}
.zone { width: 157px; height: 15px; padding-left: 5px; border-left: 1px solid #cdc9b6; }
.zoom .caret { margin-left: 10px; }

/* taskbar */
.taskbar {
  flex: none;
  display: flex;
  align-items: center;
  height: 27px;
  color: #fff;
  background: linear-gradient(#3c8cf2, #2460dc 20%, #245edb 80%, #1a44a8);
}
.start {
  width: 78px;
  height: 25px;
  padding-left: 7px;
  gap: 4px;
  font-size: 13px;
  font-weight: bold;
  font-style: italic;
  text-shadow: 1px 1px #1b5a1b;
  border-radius: 0 8px 8px 0;
  background: linear-gradient(#5cb05a, #3a963a 25%, #389438 75%, #256d25);
}
.start svg { width: 16px; height: 16px; }
.quick-launch {
  display: flex;
  gap: 6px;
  width: 98px;
  padding-left: 19px;
}
.quick-launch svg { width: 13px; height: 13px; }
.quick-launch span { line-height: 6px; font-size: 11px; margin-left: 3px; }
.task {
  width: 126px;
  height: 21px;
  margin-right: 2px;
  padding-left: 7px;
  gap: 3px;
  border-radius: 2px;
  background: linear-gradient(#5a97fa, #3c7df2 20%, #3a78ee);
}
.task.current { background: #1a4cb4; }
.locale { margin-right: 11px; }
.tray {
  display: flex;
  align-items: center;
  align-self: stretch;
  gap: 2px;
  padding-right: 10px;
  background: linear-gradient(#2fb0f8, #1290e4 20%, #1190e6 80%, #0e6fc4);
}
.tray .expand { width: 13px; height: 13px; margin-left: -6px; }
.tray time { margin-left: 4px; }
</style>
